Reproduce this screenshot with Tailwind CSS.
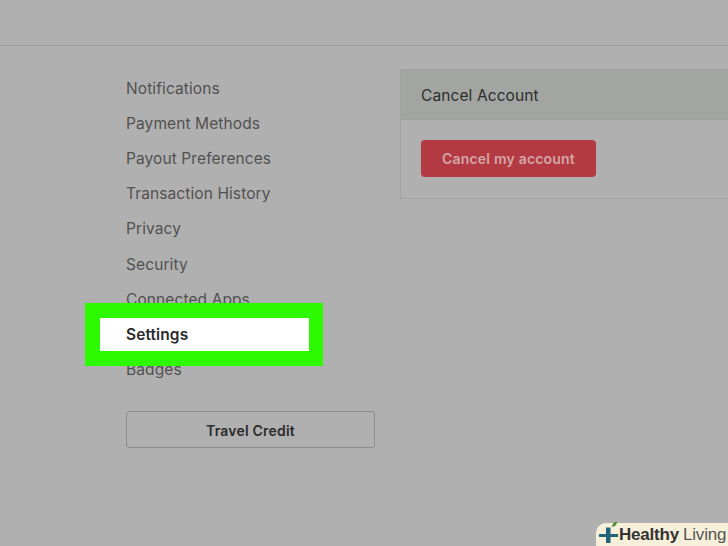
<!DOCTYPE html>
<html><head><meta charset="utf-8"><script src="https://cdn.jsdelivr.net/npm/@tailwindcss/browser@4"></script></head>
<body class="m-0">
<div class="relative w-[728px] h-[546px] overflow-hidden bg-[#b0b0b0] font-['Inter',sans-serif]">
  <div class="h-[46px] border-b border-[#a0a0a0]"></div>
  <div class="flex pt-[23px]">
    <div class="w-[274px] ml-[126px] shrink-0">
      <ul class="text-[15.5px] leading-[35.2px] tracking-[0.1px] text-[#505050] pt-[1.5px]">
        <li>Notifications</li>
        <li>Payment Methods</li>
        <li>Payout Preferences</li>
        <li>Transaction History</li>
        <li>Privacy</li>
        <li>Security</li>
        <li>Connected Apps</li>
        <li class="invisible">Settings</li>
        <li>Badges</li>
      </ul>
      <div class="mt-[24px] w-[249px] h-[37px] pt-[1px] border border-[#8c8c8c] rounded-[3px] flex items-center justify-center text-[14px] font-semibold tracking-[0.2px] text-[#2b2b2b]">Travel Credit</div>
    </div>
    <div class="flex-1 h-[130px] border border-[#a2a2a2] border-r-0">
      <div class="h-[50px] pt-[2px] bg-[#a3a5a2] border-b border-[#a0a0a0] flex items-center pl-[20px] text-[15.5px] tracking-[0.1px] text-[#2d2d2d]">Cancel Account</div>
      <div class="pl-[20px] pt-[20px]">
        <div class="w-[175px] h-[37px] rounded-[4px] bg-[#b33a42] flex items-center justify-center text-[14px] font-semibold tracking-[0.2px] text-[#d3a5a7]">Cancel my account</div>
      </div>
    </div>
  </div>
  <div class="absolute left-[85px] top-[303px] w-[238px] h-[63px] border-y-[15px] border-l-[15px] border-r-[14px] border-[#2bfa00] bg-white">
    <div class="pl-[26px] text-[15.5px] leading-[33px] tracking-[0.1px] font-semibold text-[#2b2b2b]">Settings</div>
  </div>
  <div class="absolute right-0 top-[523px] w-[132px] h-[23px] bg-[#f6efd9] rounded-tl-[10px] flex items-center pl-[23px] font-['Liberation_Sans',sans-serif] text-[17px] tracking-[-0.2px] text-[#333]">
    <svg class="absolute left-[2px] top-[-2px]" width="24" height="24" viewBox="0 0 24 24">
      <path d="M8 6.500h4.500v6.500h7.500v3h-7.500v6H8v-6H1.500c-1 0-1-3 0-3H8z" fill="#1f6478"/>
      <path d="M14 6c0-3 2-5 5-5.500 0 3-1.500 5-5 5.500z" fill="#4f8a2c"/>
    </svg>
    <span class="font-bold">Healthy</span><span class="ml-[4px] text-[#555]">Living</span>
  </div>
</div>
</body></html>
